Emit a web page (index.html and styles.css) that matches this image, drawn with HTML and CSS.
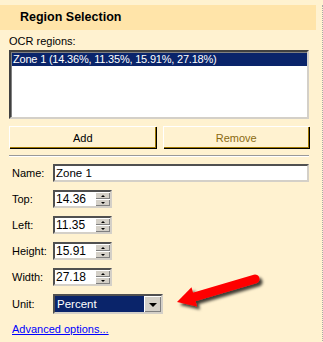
FILE: index.html
```html
<!DOCTYPE html>
<html lang="en">
<head>
    <meta charset="UTF-8">
    <title>Region Selection</title>
    <link rel="stylesheet" href="styles.css">
</head>
<body>
    <div class="page">
        <div class="header">Region Selection</div>

        <div class="content">
            <div class="caption">OCR regions:</div>
            <div class="listbox">
                <div class="item selected">Zone 1 (14.36%, 11.35%, 15.91%, 27.18%)</div>
            </div>

            <div class="buttons">
                <button class="btn">Add</button>
                <button class="btn disabled">Remove</button>
            </div>

            <div class="separator"></div>

            <div class="fields">
                <label class="lbl">Name:</label>
                <div class="textbox">Zone 1</div>

                <label class="lbl">Top:</label>
                <div class="spin"><span class="val">14.36</span><span class="arrows"><i class="up"></i><i class="down"></i></span></div>

                <label class="lbl">Left:</label>
                <div class="spin"><span class="val">11.35</span><span class="arrows"><i class="up"></i><i class="down"></i></span></div>

                <label class="lbl">Height:</label>
                <div class="spin"><span class="val">15.91</span><span class="arrows"><i class="up"></i><i class="down"></i></span></div>

                <label class="lbl">Width:</label>
                <div class="spin"><span class="val">27.18</span><span class="arrows"><i class="up"></i><i class="down"></i></span></div>

                <label class="lbl">Unit:</label>
                <div class="combo"><span class="val">Percent</span><span class="drop"><i></i></span></div>
            </div>

            <a class="link" href="#">Advanced options...</a>
        </div>

        <!-- callout arrow pointing at the Unit box -->
        <svg class="callout" width="323" height="342" viewBox="0 0 323 342">
            <defs>
                <filter id="shadow" x="-20%" y="-50%" width="150%" height="200%">
                    <feDropShadow dx="3" dy="3" stdDeviation="1.6" flood-color="#000" flood-opacity="0.75"/>
                </filter>
            </defs>
            <g filter="url(#shadow)">
                <line x1="194" y1="292" x2="255" y2="274" stroke="#f00" stroke-width="9" stroke-linecap="round"/>
                <polygon points="177,297 191.5,282.3 197.1,301.5" fill="#f00"/>
            </g>
        </svg>
    </div>
</body>
</html>
```

FILE: styles.css
```css
body {
    margin: 0;
    background-color: #fff2d0;
    font-family: "Liberation Sans", Arial, sans-serif;
    font-size: 11px;
    color: #000;
}

.page {
    position: relative;
    width: 322px;
    height: 342px;
    border-right: 1px dotted #a8a8a8;
}

.header {
    margin-top: 5px;
    width: 296px;
    height: 25px;
    padding-left: 20px;
    background-color: #ffe4a9;
    font-size: 12.5px;
    font-weight: bold;
    line-height: 25px;
}

.content {
    padding: 0 13px 0 9px;
}

.caption {
    margin-top: 4px;
    height: 16px;
    line-height: 14px;
}

.listbox {
    height: 64px;
    background: #fff;
    border-top: 2px solid #404040;
    border-left: 2px solid #404040;
    border-right: 2px solid #d4d0c8;
    border-bottom: 2px solid #d4d0c8;
    box-shadow: inset 1px 1px 0 #808080;
    padding: 1px 0 0 1px;
}

.item {
    height: 13px;
    line-height: 13px;
    padding-left: 1px;
    letter-spacing: -0.2px;
}

.selected {
    background-color: #0a246a;
    color: #fff;
}

.buttons {
    display: flex;
    gap: 7px;
    margin-top: 7px;
}

.btn {
    flex: 1;
    height: 22px;
    background-color: #fff2d0;
    border: none;
    border-top: 1px solid #fff;
    border-left: 1px solid #fff;
    box-shadow: inset -1px -1px 0 #a07800, 1px 1px 0 #000;
    font-family: "Liberation Sans", Arial, sans-serif;
    font-size: 11px;
    color: #000;
    padding: 0;
}

.btn.disabled {
    color: #8a6a10;
}

.separator {
    margin-top: 7px;
    height: 1px;
    background-color: #999;
    border-bottom: 1px solid #fff;
}

.fields {
    display: grid;
    grid-template-columns: 44px auto;
    row-gap: 8px;
    margin-top: 7px;
    align-items: center;
}

.lbl {
    padding-left: 3px;
}

.textbox,
.spin,
.combo {
    box-sizing: border-box;
    background: #fff;
    border-top: 2px solid #505050;
    border-left: 2px solid #505050;
    border-right: 2px solid #d4d0c8;
    border-bottom: 2px solid #d4d0c8;
}

.textbox {
    height: 18px;
    line-height: 14px;
    padding-left: 1px;
    font-size: 11.5px;
}

.spin {
    display: flex;
    width: 59px;
    height: 18px;
}

.spin .val {
    flex: 1;
    padding-left: 1px;
    line-height: 14px;
    font-size: 12px;
}

.arrows {
    display: flex;
    flex-direction: column;
    width: 15px;
}

.arrows i {
    flex: 1;
    position: relative;
    background: #d4d0c8;
    border-top: 1px solid #fff;
    border-left: 1px solid #fff;
    box-shadow: inset -1px -1px 0 #808080;
}

.arrows i::after {
    content: "";
    position: absolute;
    left: 5px;
    top: 2px;
    border-left: 2px solid transparent;
    border-right: 2px solid transparent;
}

.arrows .up::after {
    border-bottom: 2px solid #000;
}

.arrows .down::after {
    border-top: 2px solid #000;
}

.combo {
    display: flex;
    width: 110px;
    height: 20px;
    background-color: #0a246a;
    color: #fff;
}

.combo .val {
    flex: 1;
    padding-left: 2px;
    line-height: 16px;
    font-size: 11.5px;
}

.drop {
    position: relative;
    width: 16px;
    background: #d4d0c8;
    border-top: 1px solid #fff;
    border-left: 1px solid #fff;
    box-shadow: inset -1px -1px 0 #808080;
}

.drop i {
    position: absolute;
    left: 4px;
    top: 6px;
    border-left: 4px solid transparent;
    border-right: 4px solid transparent;
    border-top: 4px solid #000;
}

.link {
    display: inline-block;
    margin-top: 9px;
    margin-left: 3px;
    color: #0000ff;
    text-decoration: underline;
}

.callout {
    position: absolute;
    left: 0;
    top: 0;
    pointer-events: none;
}
```
